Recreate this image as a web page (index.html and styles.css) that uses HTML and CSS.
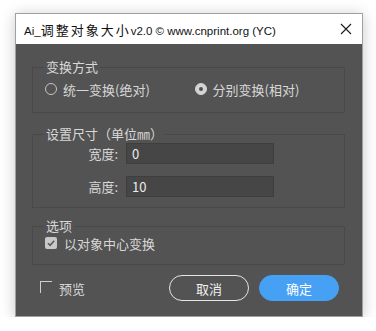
FILE: index.html
```html
<!DOCTYPE html>
<html lang="zh-CN">
<head>
    <meta charset="UTF-8">
    <meta name="viewport" content="width=device-width, initial-scale=1.0">
    <title>Ai_调整对象大小</title>
    <link rel="stylesheet" href="styles.css">
</head>
<body>

<div class="window">
    <div class="titlebar">
        <span class="title">Ai_<span class="title-cjk">调整对象大小</span>v2.0 © www.cnprint.org (YC)</span>
        <svg class="close" width="12" height="12" viewBox="0 0 12 12">
            <path d="M1 1L11 11M11 1L1 11" stroke="#1a1a1a" stroke-width="1.1" fill="none"/>
        </svg>
    </div>

    <div class="content">
        <fieldset class="group group-mode">
            <legend>变换方式</legend>
            <div class="radios">
                <label class="radio"><span class="radio-dot"></span>统一变换(绝对)</label>
                <label class="radio checked"><span class="radio-dot"></span>分别变换(相对)</label>
            </div>
        </fieldset>

        <fieldset class="group group-size">
            <legend>设置尺寸（单位㎜）</legend>
            <div class="field">
                <span class="field-label">宽度:</span>
                <div class="input">0</div>
            </div>
            <div class="field">
                <span class="field-label">高度:</span>
                <div class="input">10</div>
            </div>
        </fieldset>

        <fieldset class="group group-opts">
            <legend>选项</legend>
            <label class="check"><span class="check-box">
                <svg width="12" height="12" viewBox="0 0 12 12"><path d="M3 6.2L5.1 8.3L9.2 3.8" stroke="#5a5a5a" stroke-width="1.6" fill="none"/></svg>
            </span>以对象中心变换</label>
        </fieldset>

        <div class="footer">
            <label class="preview"><span class="preview-box"></span>预览</label>
            <div class="buttons">
                <button class="btn btn-cancel">取消</button>
                <button class="btn btn-ok">确定</button>
            </div>
        </div>
    </div>
</div>

</body>
</html>
```

FILE: styles.css
```css
body {
    margin: 0;
    background: #fff;
    font-family: "Noto Sans CJK SC", "Noto Sans", sans-serif;
}
.window {
    width: 348px;
    height: 304px;
    margin: 13px 0 0 15px;
    box-sizing: border-box;
    border: 1px solid #a0a0a0;
    box-shadow: 0 2px 14px rgba(0, 0, 0, 0.22);
    display: flex;
    flex-direction: column;
}
.titlebar {
    height: 30px;
    background: #fff;
    display: flex;
    align-items: center;
    padding: 0 10px 0 8px;
}
.title {
    font-family: "Liberation Sans", "Noto Sans CJK SC", sans-serif;
    font-size: 11.5px;
    color: #111;
    flex: 1;
    white-space: nowrap;
}
.title-cjk {
    font-family: "Noto Sans CJK SC", sans-serif;
    font-size: 13px;
    letter-spacing: 2px;
}
.content {
    flex: 1;
    background: #535353;
    padding: 16px 17px 0 16px;
    color: #d8d8d8;
    font-size: 13px;
}
.group {
    margin: 0;
    border: 1px solid #494949;
    padding: 0;
    min-width: 0;
}
.group legend {
    line-height: 14px;
    margin-left: 11px;
    padding: 0 2px;
    color: #d8d8d8;
}
.group-mode {
    padding: 7px 0 15px 0;
}
.radios {
    display: flex;
    height: 16px;
    align-items: center;
    padding-left: 12px;
}
.radio {
    display: flex;
    align-items: center;
    gap: 6px;
    width: 150px;
}
.radio-dot {
    width: 10px;
    height: 10px;
    border: 1px solid #c4c4c4;
    border-radius: 50%;
    box-sizing: content-box;
}
.radio.checked .radio-dot {
    background: #d4d4d4;
    border-color: #d4d4d4;
    position: relative;
}
.radio.checked .radio-dot::after {
    content: "";
    position: absolute;
    left: 3px;
    top: 3px;
    width: 4px;
    height: 4px;
    border-radius: 50%;
    background: #505050;
}
.group-size {
    margin-top: 14px;
    padding: 2px 0 10px 0;
}
.field {
    display: flex;
    align-items: center;
    gap: 8px;
    height: 21px;
}
.field + .field {
    margin-top: 12px;
}
.field-label {
    width: 85px;
    text-align: right;
}
.input {
    width: 148px;
    height: 21px;
    box-sizing: border-box;
    background: #464646;
    border: 1px solid #3e3e3e;
    padding: 0 5px;
    line-height: 19px;
    color: #ececec;
}
.group-opts {
    margin-top: 11px;
    padding: 2px 0 13px 0;
}
.check {
    display: flex;
    align-items: center;
    gap: 7px;
    height: 16px;
    padding-left: 12px;
}
.check-box {
    width: 12px;
    height: 12px;
    border-radius: 2px;
    background: #c8c8c8;
    display: flex;
}
.footer {
    display: flex;
    align-items: center;
    margin-top: 10px;
    height: 26px;
}
.preview {
    display: flex;
    align-items: center;
    gap: 7px;
    margin-left: 8px;
}
.preview-box {
    width: 11px;
    height: 11px;
    border-top: 1px solid #cfcfcf;
    border-left: 1px solid #cfcfcf;
    margin-top: -2px;
}
.buttons {
    margin-left: auto;
    margin-right: 6px;
    display: flex;
    gap: 10px;
}
.btn {
    width: 80px;
    height: 26px;
    border-radius: 13px;
    font-family: inherit;
    font-size: 13px;
    padding: 0;
    cursor: pointer;
}
.btn-cancel {
    background: transparent;
    border: 1px solid #e6e6e6;
    color: #f0f0f0;
}
.btn-ok {
    background: #46a0f4;
    border: 1px solid #46a0f4;
    color: #fff;
}
```
